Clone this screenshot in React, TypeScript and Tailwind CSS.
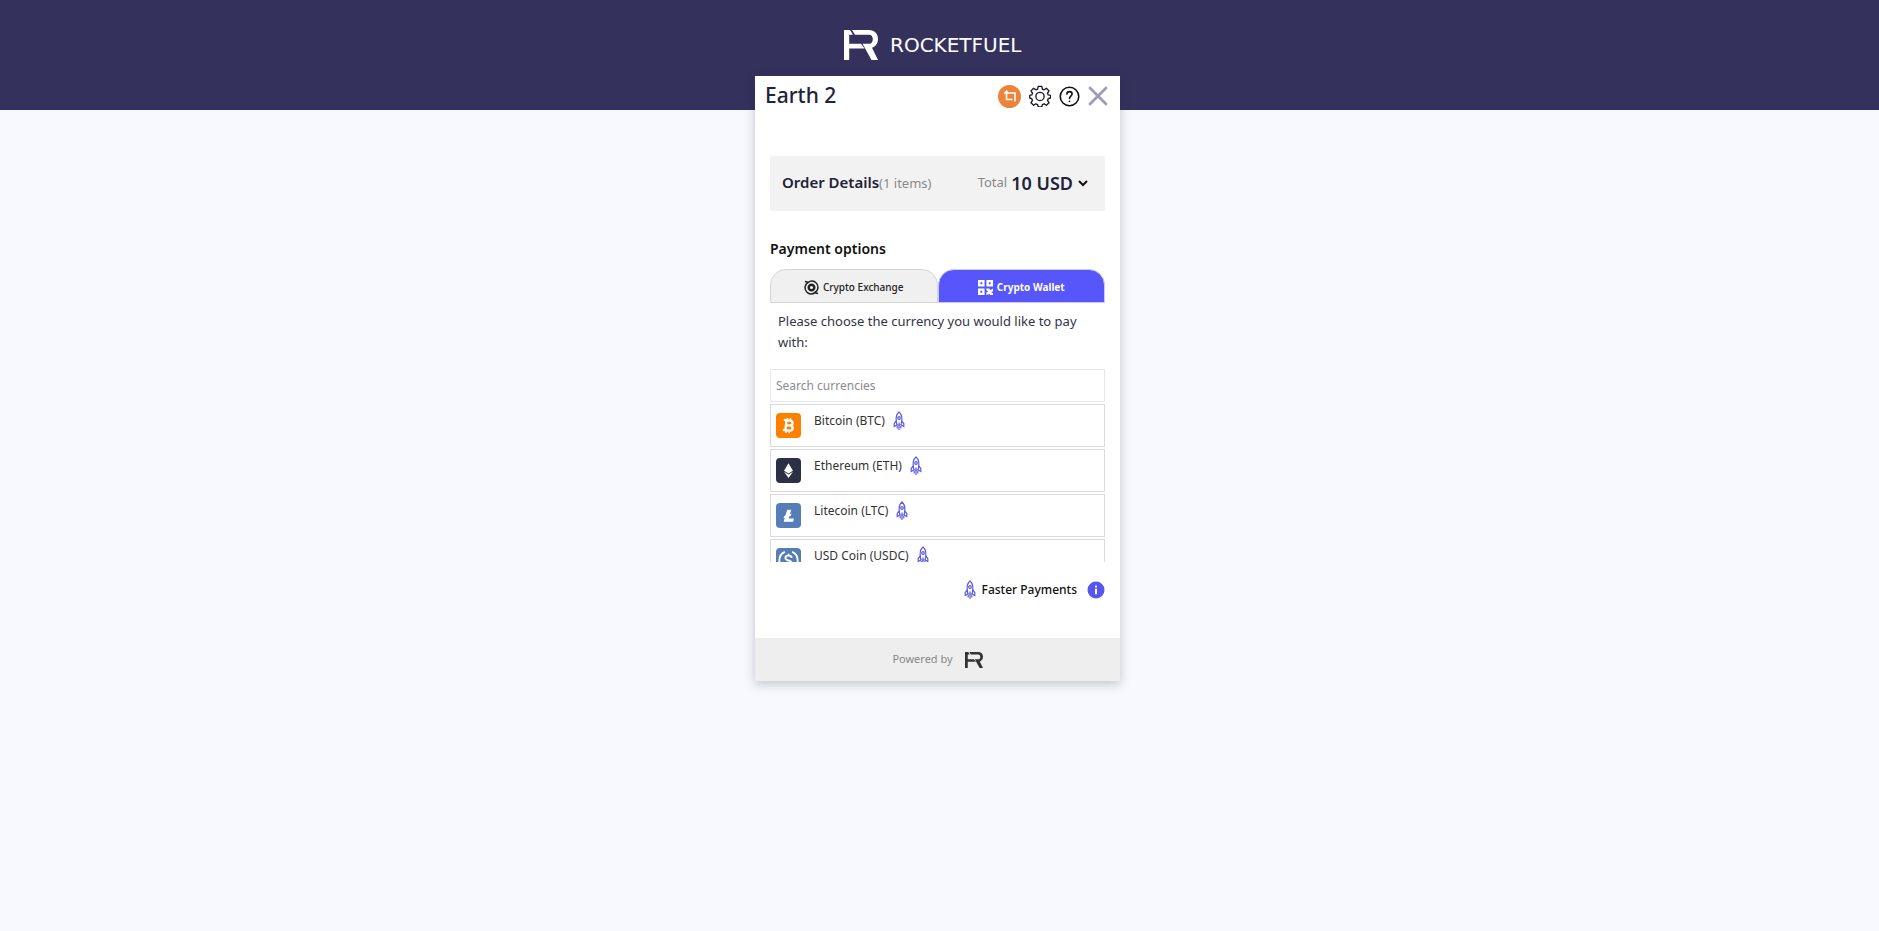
import { useState } from 'react'
import type { ReactNode } from 'react'

const CURRENCIES = [
  { name: 'Bitcoin', code: 'BTC', color: 'bg-[#ff7f00]' },
  { name: 'Ethereum', code: 'ETH', color: 'bg-[#2b3044]' },
  { name: 'Litecoin', code: 'LTC', color: 'bg-[#557db8]' },
  { name: 'USD Coin', code: 'USDC', color: 'bg-[#557db8]' },
]

const COIN_GLYPHS: Record<string, ReactNode> = {
  BTC: (
    <g transform="rotate(6 12 12)" fill="none" stroke="#fff" strokeWidth="2.2">
      <path d="M7 7.2h6c3.6 0 3.6 4.6 0 4.6H9.5M13 11.8c4.400 0 4.400 5 0 5H7M9.500 7v10" />
      <path d="M10.300 4.800V7M13.300 4.800V7M10.300 17v2.300M13.300 17v2.300" strokeWidth="1.500" />
    </g>
  ),
  ETH: (
    <g fill="#fff">
      <path d="M12 5l4.3 7.2L12 14.8l-4.3-2.6z" />
      <path d="M7.7 13.3l4.3 2.5 4.3-2.5L12 19.2z" />
    </g>
  ),
  LTC: <path d="M10.800 6.500h3.800l-1.200 4.200 1.500-.6-.5 1.900-1.500.6-.7 2.400h5l-.7 2.900H7.400l1-3.800-1.200.5.5-1.900 1.300-.6z" fill="#fff" />,
  USDC: (
    <g fill="none" stroke="#fff" strokeWidth="1.8">
      <path d="M8.5 3.800a9 9 0 0 0 0 16.400M15.500 3.800a9 9 0 0 1 0 16.400" />
      <path d="M15 9.600c0-3-6-3-6 0s6 1.800 6 4.800-6 3-6 0M12 5.500v2M12 16.500v2" />
    </g>
  ),
}

function BrandMark({ className }: { className: string }) {
  return (
    <svg viewBox="0 0 34 30" className={className} fill="currentColor" aria-hidden="true">
      <path d="M0 0h6l3 4.700H5.200V13.700H17l3.500 4.800H5.200V30H0z" />
      <path d="M8 0H25c5.500 0 9 3.500 9 9 0 4.500-2.500 7.500-6 8.800L34 30h-6.500L18.500 13.700H25c2.500 0 3.800-1.800 3.800-4.500S27.500 4.700 25 4.700H11z" />
    </svg>
  )
}

function Rocket() {
  return (
    <svg viewBox="0 0 12 20" className="h-5 w-3 shrink-0" fill="none" stroke="#5a5ae0" strokeWidth="1.200" aria-hidden="true">
      <path d="M6 1C3.600 3 2.900 6 3.200 9l.6 5h4.400l.6-5C9.100 6 8.400 3 6 1z" />
      <circle cx="6" cy="7" r="1.300" />
      <path d="M3.300 10L1.200 12.500v3l2.600-1.500M8.700 10l2.100 2.500v3L8.200 14M6 11.500V19M4.200 15v2.500M7.800 15v2.500" />
    </svg>
  )
}

export default function App() {
  const [tab, setTab] = useState('wallet')
  const [query, setQuery] = useState('')

  const visible = CURRENCIES.filter((c) =>
    `${c.name} ${c.code}`.toLowerCase().includes(query.toLowerCase())
  )

  const tabClass = (id: string) =>
    tab === id
      ? 'border-[#c9c9fa] bg-[#5656fb] font-bold text-white'
      : 'border-[#d5d5d5] bg-[#f0f0f0] font-medium text-[#222]'

  return (
    <div className="min-h-screen bg-[#f8f9fe] font-['Noto_Sans',sans-serif] text-[#222238]">
      <header className="flex h-[110px] items-start justify-center gap-3 bg-[#34315d] pt-[30px] text-white">
        <BrandMark className="h-[30px] w-[34px]" />
        <span className="w-[145px] font-['DejaVu_Sans',sans-serif] text-xl leading-[30px]">ROCKETFUEL</span>
      </header>

      <main className="flex justify-center pr-1">
        <div className="-mt-[34px] w-[365px] bg-white shadow-[0_3px_10px_rgba(30,30,60,0.25)]">
          {/* Title bar */}
          <div className="flex h-10 items-center justify-between pr-3 pl-[10px]">
            <h1 className="text-[21px] font-medium">Earth 2</h1>
            <div className="flex items-center gap-2">
              <button aria-label="Switch" className="flex size-[23px] items-center justify-center rounded-full bg-[#ec8338]">
                <svg viewBox="0 0 14 14" className="size-[14px]" fill="none" stroke="#fff" strokeWidth="1.600">
                  <path d="M5.500 4H12v6.500M9.500 10.500H3.500V3M1.200 4.800l2.300-2.600 2.300 2.600M12 9v3.500" />
                </svg>
              </button>
              <button aria-label="Settings">
                <svg viewBox="0 0 24 24" className="size-[22px]" fill="none" stroke="#1b1b2c" strokeWidth="1.500" strokeLinejoin="round">
                  <path d="M10 1.500h4l.6 2.900 1.900.8 2.500-1.600 2.800 2.800-1.600 2.500.8 1.900 2.500.6v2.800l-2.500.7-.8 1.900 1.600 2.500-2.800 2.800-2.500-1.600-1.900.8-.6 2.700h-4l-.6-2.700-1.900-.8L5 22.100l-2.800-2.800 1.600-2.500-.8-1.900-2.200-.7v-2.800l2.200-.6.8-1.900-1.600-2.500L5 3.600l2.500 1.600 1.900-.8z" />
                  <circle cx="12" cy="12.500" r="4.500" />
                </svg>
              </button>
              <button aria-label="Help">
                <svg viewBox="0 0 22 22" className="size-[21px]" fill="none" stroke="#111" strokeWidth="1.700" strokeLinecap="round">
                  <circle cx="11" cy="11" r="9.700" />
                  <path d="M8.300 8.500C8.300 5 13.700 5 13.700 8.500c0 2-2.700 2.300-2.700 4.500M11 16v.3" />
                </svg>
              </button>
              <button aria-label="Close">
                <svg viewBox="0 0 20 20" className="size-5" fill="none" stroke="#9d9bb8" strokeWidth="2.800" strokeLinecap="round">
                  <path d="M2 2l16 16M18 2L2 18" />
                </svg>
              </button>
            </div>
          </div>

          <div className="px-[15px] pt-10">
            <button className="flex h-[55px] w-full items-center justify-between rounded-xs bg-[#f2f2f2] pr-4 pb-[2px] pl-3">
              <span className="text-[13px] text-[#888]">
                <span className="text-[15px] font-semibold text-[#222238]">Order Details</span>(1 items)
              </span>
              <span className="flex items-center gap-1 text-[13px] text-[#888]">
                Total <span className="text-lg font-semibold text-[#222238]">10 USD</span>
                <svg viewBox="0 0 12 12" className="size-3" fill="none" stroke="#111" strokeWidth="2">
                  <path d="M2 4l4 4 4-4" />
                </svg>
              </span>
            </button>

            <h2 className="mt-7 text-sm leading-5 font-semibold text-[#111]">Payment options</h2>

            <div role="tablist" className="mt-[10px] grid grid-cols-2">
              <button
                role="tab"
                aria-selected={tab === 'exchange'}
                onClick={() => setTab('exchange')}
                className={`flex h-[34px] items-center justify-center gap-1 rounded-t-2xl border pt-[2px] text-[10px] ${tabClass('exchange')}`}
              >
                <svg viewBox="0 0 16 16" className="size-[15px]" fill="none" stroke="currentColor" strokeWidth="1.600">
                  <circle cx="8" cy="8" r="3" strokeWidth="2.600" />
                  <path d="M3.200 13A6.500 6.500 0 0 1 4.500 2.500M12.800 3a6.500 6.500 0 0 1-1.300 10.500M1 1.500l3.500 1A6 6 0 0 1 12.800 3M15 14.500l-3.500-1A6 6 0 0 1 3.200 13" />
                </svg>
                Crypto Exchange
              </button>
              <button
                role="tab"
                aria-selected={tab === 'wallet'}
                onClick={() => setTab('wallet')}
                className={`flex h-[34px] items-center justify-center gap-1 rounded-t-2xl border pt-[2px] text-[10px] ${tabClass('wallet')}`}
              >
                <svg viewBox="0 0 16 16" className="size-[15px]" fill="currentColor" fillRule="evenodd">
                  <path d="M0 0h7v7H0zM2.500 2.500v2h2v-2zM9 0h7v7H9zM11.500 2.500v2h2v-2zM0 9h7v7H0zM2.500 11.500v2h2v-2z" />
                  <path d="M9 9h3l1 2 3-2v3l-2 1 2 1v2h-3l-1-1-3 1v-3l2-1-2-1z" />
                </svg>
                Crypto Wallet
              </button>
            </div>

            <p className="mt-2 px-2 text-[13px] leading-[21px] text-[#333348]">
              Please choose the currency you would like to pay with:
            </p>

            <input
              type="text"
              aria-label="Search currencies"
              placeholder="Search currencies"
              value={query}
              onChange={(e) => setQuery(e.target.value)}
              className="mt-4 block h-[33px] w-full border border-[#e8e8ea] px-[5px] text-[12px] outline-none placeholder:text-[#8c8c8c]"
            />

            <ul className="mt-[2px] flex h-[158px] flex-col gap-[2px] overflow-y-auto [scrollbar-width:none]">
              {visible.map((c) => (
                <li key={c.code} className="h-[43px] shrink-0 border border-[#dadadd]">
                  <button className="flex size-full items-start px-[5px] text-left text-[12px] text-[#333]">
                    <span className={`mt-2 flex size-[25px] items-center justify-center rounded ${c.color}`}>
                      <svg viewBox="0 0 24 24" className="size-[25px]">{COIN_GLYPHS[c.code]}</svg>
                    </span>
                    <span className="mt-[6px] mr-2 ml-[13px] leading-5">
                      {c.name} ({c.code})
                    </span>
                    <span className="mt-[6px]">
                      <Rocket />
                    </span>
                  </button>
                </li>
              ))}
            </ul>

            <div className="mt-[18px] flex h-5 items-center justify-end text-[12px] font-medium text-[#111]">
              <Rocket />
              <span className="mr-[10px] ml-[6px]">Faster Payments</span>
              <button aria-label="About faster payments">
                <svg viewBox="0 0 18 18" className="size-[18px]">
                  <circle cx="9" cy="9" r="8.500" fill="#5656ee" />
                  <path d="M8 4.500h2v2H8zM8 7.800h2v5.500H8z" fill="#fff" />
                </svg>
              </button>
            </div>
          </div>

          <footer className="mt-[38px] flex h-[43px] items-center justify-center gap-3 bg-[#eee] text-[11px] text-[#888]">
            Powered by
            <BrandMark className="h-4 w-[18px] text-[#333]" />
          </footer>
        </div>
      </main>
    </div>
  )
}
